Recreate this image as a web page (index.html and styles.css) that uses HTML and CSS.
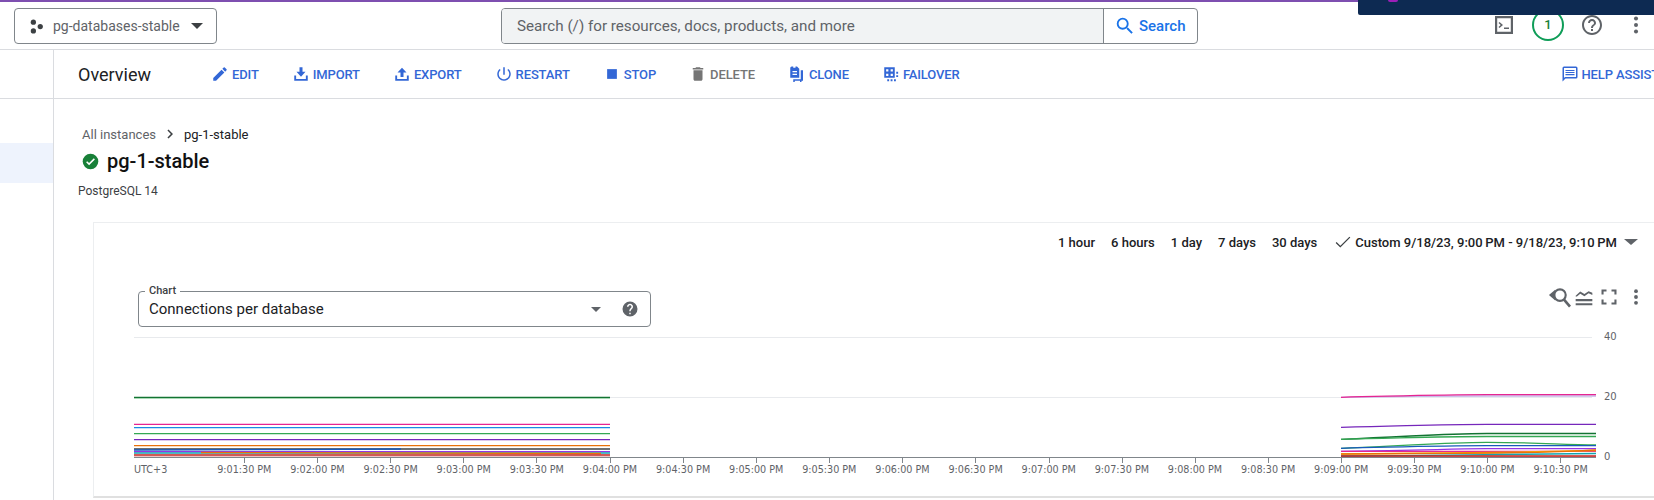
FILE: index.html
```html
<!DOCTYPE html>
<html lang="en">
<head>
<meta charset="utf-8">
<title>pg-1-stable</title>
<link rel="stylesheet" href="styles.css">
</head>
<body>
<div class="page">
  <div class="topline"></div>
  <div class="banner"><span class="banner-dot"></span></div>
  <header class="header">
    <button class="project">
      <svg class="project-icon" viewBox="0 0 24 24"><circle cx="7" cy="5" r="4.2"/><circle cx="7" cy="19" r="4.2"/><circle cx="18" cy="12" r="4.2"/></svg>
      <span class="project-name">pg-databases-stable</span>
      <span class="caret caret-dark"></span>
    </button>
    <div class="search">
      <div class="search-input">Search (/) for resources, docs, products, and more</div>
      <div class="search-btn">
        <svg class="search-icon" viewBox="0 0 24 24"><path d="M15.5 14h-.79l-.28-.27A6.47 6.47 0 0 0 16 9.5 6.5 6.5 0 1 0 9.5 16c1.61 0 3.09-.59 4.23-1.57l.27.28v.79l5 4.99L20.49 19l-4.99-5zm-6 0C7.01 14 5 11.99 5 9.5S7.01 5 9.5 5 14 7.01 14 9.5 11.99 14 9.5 14z"/></svg>
        <span>Search</span>
      </div>
    </div>
    <div class="tools">
      <svg class="tool tool-term" viewBox="0 0 24 24"><path d="M3 3h18v18H3zM5.200 5.200v13.600h13.600V5.200z" fill-rule="evenodd"/><path d="M7.500 9l3.500 3-3.500 3-1-1 2.200-2-2.200-2zM12 14.500h5V16h-5z"/></svg>
      <div class="badge">1</div>
      <svg class="tool tool-help" viewBox="0 0 24 24"><path d="M11 18h2v-2h-2v2zm1-16C6.48 2 2 6.48 2 12s4.48 10 10 10 10-4.48 10-10S17.52 2 12 2zm0 18c-4.41 0-8-3.59-8-8s3.59-8 8-8 8 3.59 8 8-3.59 8-8 8zm0-14c-2.21 0-4 1.79-4 4h2c0-1.1.9-2 2-2s2 .9 2 2c0 2-3 1.75-3 5h2c0-2.25 3-2.5 3-5 0-2.21-1.79-4-4-4z"/></svg>
      <svg class="tool tool-more" viewBox="0 0 24 24"><circle cx="12" cy="5" r="2.2"/><circle cx="12" cy="12" r="2.2"/><circle cx="12" cy="19" r="2.2"/></svg>
    </div>
  </header>
  <div class="layout">
    <aside class="rail">
      <div class="rail-head"></div>
      <div class="rail-item"></div>
    </aside>
    <main class="main">
      <div class="toolbar">
        <h2 class="toolbar-title">Overview</h2>
        <div class="actions">
          <a class="action"><svg viewBox="0 0 24 24"><path d="M3 17.25V21h3.75L17.81 9.94l-3.75-3.75L3 17.25zM20.71 7.04a1 1 0 0 0 0-1.41l-2.34-2.34a1 1 0 0 0-1.41 0l-1.83 1.83 3.75 3.75 1.83-1.83z"/></svg>EDIT</a>
          <a class="action"><svg viewBox="0 0 24 24"><path d="M10 3h4v6h4l-6 6.5L6 9h4zM3 14h2.500v4.500h13V14H21v7H3z"/></svg>IMPORT</a>
          <a class="action"><svg viewBox="0 0 24 24"><path d="M10 16V10H6l6-6.500L18 10h-4v6zM3 14h2.500v4.500h13V14H21v7H3z"/></svg>EXPORT</a>
          <a class="action"><svg viewBox="0 0 24 24"><path d="M13 3h-2v10h2V3zm4.830 2.170l-1.420 1.420C17.990 7.860 19 9.810 19 12c0 3.870-3.130 7-7 7s-7-3.130-7-7c0-2.190 1.010-4.140 2.580-5.420L6.170 5.170C4.230 6.820 3 9.260 3 12c0 4.970 4.030 9 9 9s9-4.030 9-9c0-2.740-1.230-5.180-3.170-6.830z"/></svg>RESTART</a>
          <a class="action"><svg viewBox="0 0 24 24"><path d="M5.500 5.500h13v13h-13z"/></svg>STOP</a>
          <a class="action action-off"><svg viewBox="0 0 24 24"><path d="M6 19c0 1.100.9 2 2 2h8c1.100 0 2-.9 2-2V7H6v12zM19 4h-3.500l-1-1h-5l-1 1H5v2h14V4z"/></svg>DELETE</a>
          <a class="action"><svg viewBox="0 0 24 24"><path fill-rule="evenodd" d="M5 2h2v1.500h3V2h2l3 3v12H3V4a2 2 0 0 1 2-2zm1 6v1.800h6V8zm0 3.500v1.800h6v-1.800z"/><path d="M17 7h3v14h-2v1.500h-2V21H9v1.500H7V19h10z"/></svg>CLONE</a>
          <a class="action"><svg viewBox="0 0 24 24"><path fill-rule="evenodd" d="M3 3h14v14H3zM5.500 5.500v3h3v-3zm6 0v3h3v-3zM5.500 11.500v3h3v-3zm6 0v3h3v-3z"/><path d="M19 9h2.500v2.500H19zM19 13.500h2.500V16H19zM7 19h2.500v2.500H7zM11.500 19H14v2.500h-2.500zM16 19h2.500v2.500H16z"/></svg>FAILOVER</a>
          <a class="action action-help"><svg viewBox="0 0 24 24"><path d="M20 2H4a2 2 0 0 0-2 2v18l4-4h14a2 2 0 0 0 2-2V4a2 2 0 0 0-2-2zm0 14H5.170L4 17.170V4h16v12zM6 12h12v1.500H6zM6 9.300h12v1.500H6zM6 6.500h12V8H6z"/></svg>HELP ASSISTANT</a>
        </div>
      </div>
      <section class="content">
        <div class="crumbs">
          <span class="crumb-link">All instances</span>
          <svg class="crumb-sep" viewBox="0 0 24 24"><path d="M8.590 16.590 13.170 12 8.590 7.410 10 6l6 6-6 6z"/></svg>
          <span class="crumb-current">pg-1-stable</span>
        </div>
        <div class="title-row">
          <svg class="status" viewBox="0 0 24 24"><circle cx="12" cy="12" r="11" fill="#188038"/><path d="M10 17.200 5.800 13l1.500-1.500 2.700 2.700 6.700-6.700 1.500 1.500z" fill="#fff"/></svg>
          <h1 class="title">pg-1-stable</h1>
        </div>
        <div class="subtitle">PostgreSQL 14</div>
        <div class="card">
          <div class="ranges">
            <span class="range">1 hour</span>
            <span class="range">6 hours</span>
            <span class="range">1 day</span>
            <span class="range">7 days</span>
            <span class="range">30 days</span>
            <span class="range range-custom">
              <svg class="range-check" viewBox="0 0 24 24"><path d="M1 13.500 2.400 12l5.600 5.600L21.600 4 23 5.400 8 20.400z"/></svg>Custom 9/18/23, 9:00&#8201;PM - 9/18/23, 9:10&#8201;PM
            </span>
            <span class="caret caret-dim"></span>
          </div>
          <div class="chart-head">
            <div class="select">
              <span class="select-label">Chart</span>
              <span class="select-value">Connections per database</span>
              <span class="caret caret-small"></span>
              <svg class="select-help" viewBox="0 0 24 24"><path d="M12 2a10 10 0 1 0 0 20 10 10 0 0 0 0-20zm1 17h-2v-2h2v2zm2.070-7.750-.9.920C13.450 12.900 13 13.500 13 15h-2v-.5c0-1.100.45-2.100 1.170-2.830l1.240-1.260c.37-.36.59-.86.59-1.410 0-1.100-.9-2-2-2s-2 .9-2 2H8c0-2.210 1.790-4 4-4s4 1.790 4 4c0 .88-.36 1.680-.93 2.250z"/></svg>
            </div>
            <div class="chart-tools">
              <svg class="chart-tool tool-wide" viewBox="0 0 24 24"><path class="mag-arrow" d="M1 9.500 7.500 4v11z"/><circle class="mag-line" cx="12.500" cy="9.500" r="6"/><path class="mag-line mag-handle" d="M16.500 14 23 21.500"/></svg>
              <svg class="chart-tool" viewBox="0 0 24 24"><path d="M2 14.500h20V17H2zM2 19.500h20V22H2zM2 10.500l5.500-5 5 3 5-3.500 4.500 2v2.500l-4.500-2-5 3.500-5-3-4 3.500H2z"/></svg>
              <svg class="chart-tool" viewBox="0 0 24 24"><path d="M3 3h6v2.500H5.500V9H3zM15 3h6v6h-2.500V5.500H15zM3 15h2.500v3.500H9V21H3zM18.500 15H21v6h-6v-2.500h3.500z"/></svg>
              <svg class="chart-tool tool-dots" viewBox="0 0 24 24"><circle cx="12" cy="5" r="2.300"/><circle cx="12" cy="12" r="2.300"/><circle cx="12" cy="19" r="2.300"/></svg>
            </div>
          </div>
          <svg class="plot" viewBox="0 0 1561 166" width="1561" height="166">
            <g transform="translate(-93 -330)">
              <g class="grid">
                <path d="M133 337.500H1591"/>
                <path d="M133 397.500H1591"/>
              </g>
              <g class="series">
                <path stroke="#a8dab5" d="M133 398.300H609"/>
                <path stroke="#137333" d="M133 397.300H609"/>
                <path stroke="#e52592" d="M133 424.300H609"/>
                <path stroke="#1a8ae5" d="M133 427.700H609"/>
                <path stroke="#34a853" d="M133 433.700H609"/>
                <path stroke="#7627bb" d="M133 439.700H609"/>
                <path stroke="#e8710a" d="M133 445.700H609"/>
                <path stroke="#3c4043" d="M133 449H609"/>
                <path stroke="#185abc" d="M133 450C250 450 300 449.500 400 449"/>
                <path stroke="#9334e6" d="M133 451.700H609"/>
                <path stroke="#12a4af" d="M133 453H609"/>
                <path stroke="#e8710a" d="M200 452.500C300 452 400 453.500 600 453.500"/>
                <path stroke="#c5221f" d="M133 455H609"/>
                <path stroke="#b31412" d="M133 457.300H609"/>

                <path stroke="#c6b6e8" d="M1340 397.300C1420 396 1440 396 1486 396H1595"/>
                <path stroke="#e52592" d="M1340 397.300C1420 395.500 1440 394.700 1486 394.700H1595"/>
                <path stroke="#7627bb" d="M1340 427.300C1420 425.500 1440 424.300 1486 424.300H1595"/>
                <path stroke="#137333" d="M1340 439.300C1420 436 1440 433.500 1486 433.500H1595"/>
                <path stroke="#34a853" d="M1340 439.300C1420 437.500 1440 436.500 1486 436.500H1595"/>
                <path stroke="#34a853" d="M1340 448.300C1420 445 1440 442.300 1486 442.300C1530 442.300 1560 444.500 1595 445"/>
                <path stroke="#185abc" d="M1340 448.300C1420 446.500 1440 445.700 1486 445.700H1595"/>
                <path stroke="#9334e6" d="M1340 451.300C1420 451 1440 449 1486 448.700H1595"/>
                <path stroke="#e52592" d="M1340 451.300H1595"/>
                <path stroke="#f9ab00" d="M1340 454C1420 453 1440 453 1486 452.500C1530 452 1560 451 1595 450.500"/>
                <path stroke="#e8710a" d="M1340 454C1420 454 1460 453.500 1500 453C1540 452.500 1570 451 1595 450"/>
                <path stroke="#12a4af" d="M1340 456C1420 455.500 1480 455 1595 453.500"/>
                <path stroke="#c5221f" d="M1340 456H1595"/>
                <path stroke="#b31412" d="M1340 457.300H1595"/>
              </g>
              <path class="axis" d="M133 457.500H1595"/>
              <g class="ticks"><path d="M243.500 458v5M316.500 458v5M389.500 458v5M462.500 458v5M535.500 458v5M609.500 458v5M682.500 458v5M755.500 458v5M828.500 458v5M901.500 458v5M974.500 458v5M1048.500 458v5M1121.500 458v5M1194.500 458v5M1267.500 458v5M1340.500 458v5M1413.500 458v5M1486.500 458v5M1559.500 458v5"/></g>
              <g class="xlabels">
                <text x="133" y="473" class="start">UTC+3</text>
                <text x="243.300" y="473">9:01:30 PM</text>
                <text x="316.400" y="473">9:02:00 PM</text>
                <text x="389.600" y="473">9:02:30 PM</text>
                <text x="462.700" y="473">9:03:00 PM</text>
                <text x="535.800" y="473">9:03:30 PM</text>
                <text x="609" y="473">9:04:00 PM</text>
                <text x="682.100" y="473">9:04:30 PM</text>
                <text x="755.200" y="473">9:05:00 PM</text>
                <text x="828.300" y="473">9:05:30 PM</text>
                <text x="901.500" y="473">9:06:00 PM</text>
                <text x="974.600" y="473">9:06:30 PM</text>
                <text x="1047.700" y="473">9:07:00 PM</text>
                <text x="1120.900" y="473">9:07:30 PM</text>
                <text x="1194" y="473">9:08:00 PM</text>
                <text x="1267.100" y="473">9:08:30 PM</text>
                <text x="1340.200" y="473">9:09:00 PM</text>
                <text x="1413.400" y="473">9:09:30 PM</text>
                <text x="1486.500" y="473">9:10:00 PM</text>
                <text x="1559.600" y="473">9:10:30 PM</text>
              </g>
              <g class="ylabels">
                <text x="1603" y="340">40</text>
                <text x="1603" y="400">20</text>
                <text x="1603" y="460">0</text>
              </g>
            </g>
          </svg>
        </div>
      </section>
    </main>
  </div>
</div>
</body>
</html>
```

FILE: styles.css
```css
* { box-sizing: border-box; }
html, body { margin: 0; padding: 0; background: #fff; }
body { font-family: Roboto, "Liberation Sans", sans-serif; color: #202124; }
.page { position: relative; width: 1654px; height: 500px; overflow: hidden; }
.topline { height: 2px; background: #7e4fb0; }
.banner { position: absolute; top: 0; right: 0; width: 296px; height: 15px; background: #0d2a52; border-bottom-left-radius: 2px; z-index: 3; }
.banner-dot { display: block; width: 10px; height: 2px; margin-left: 30px; background: #9c1fb8; border-radius: 0 0 5px 5px; }

.header { display: flex; align-items: flex-start; height: 48px; padding: 6px 0 0 14px; border-bottom: 1px solid #dadce0; }
.project { display: flex; align-items: center; width: 203px; height: 36px; padding: 0 0 0 14px; background: #fff; border: 1px solid #80868b; border-radius: 4px; font: inherit; }
.project-icon { width: 15px; height: 15px; fill: #3c4043; }
.project-name { margin-left: 9px; font-size: 14px; color: #5f6368; white-space: nowrap; }
.caret { display: block; width: 0; height: 0; border-style: solid; border-color: transparent; border-width: 6px 6px 0; }
.caret-dark { margin-left: 11px; border-top-color: #3c4043; }

.search { display: flex; width: 697px; height: 36px; margin-left: 284px; border: 1px solid #80868b; border-radius: 4px; overflow: hidden; }
.search-input { flex: 1; padding-left: 15px; background: #f1f3f4; border-right: 1px solid #80868b; font-size: 15.200px; line-height: 34px; color: #5f6368; }
.search-btn { display: flex; align-items: center; width: 93px; padding-left: 10px; font-size: 15px; font-weight: 500; color: #1a73e8; }
.search-icon { width: 22px; height: 22px; margin-right: 3px; fill: #1a73e8; }

.tools { display: flex; align-items: center; height: 36px; margin: -1px 0 0 294px; }
.tool { fill: #5f6368; }
.tool-term { width: 24px; height: 24px; }
.badge { width: 32px; height: 32px; margin-left: 16px; border: 2px solid #0f9d58; border-radius: 50%; font-size: 13px; font-weight: 500; line-height: 28px; text-align: center; color: #188038; }
.tool-help { width: 24px; height: 24px; margin-left: 16px; }
.tool-more { width: 22px; height: 22px; margin-left: 21px; }

.layout { display: flex; }
.rail { flex: none; width: 54px; height: 450px; border-right: 1px solid #dadce0; }
.rail-head { height: 49px; border-bottom: 1px solid #dadce0; }
.rail-item { height: 40px; margin-top: 44px; background: #eef3fd; }

.main { flex: 1; min-width: 0; overflow: hidden; }
.toolbar { display: flex; align-items: center; height: 49px; padding-left: 24px; border-bottom: 1px solid #dadce0; white-space: nowrap; }
.toolbar-title { margin: 0; font-size: 18px; font-weight: 400; color: #202124; }
.actions { display: flex; align-items: center; gap: 33px; margin-left: 60px; }
.action { display: flex; align-items: center; gap: 3px; font-size: 13px; font-weight: 500; letter-spacing: -.13px; color: #3367d6; }
.action svg { width: 18px; height: 18px; fill: #3367d6; }
.action-off { color: #757575; }
.action-off svg { fill: #757575; }
.action-help { margin-left: 568px; }

.content { padding-top: 26px; }
.crumbs { display: flex; align-items: center; height: 18px; padding-left: 28px; font-size: 13px; }
.crumb-link { color: #5f6368; }
.crumb-sep { width: 18px; height: 18px; margin: 0 5px 0 5px; fill: #3c4043; }
.crumb-current { color: #202124; }
.title-row { display: flex; align-items: center; height: 28px; margin-top: 4px; padding-left: 28px; }
.status { width: 17px; height: 17px; }
.title { margin: 0 0 0 8px; font-size: 20px; font-weight: 500; color: #111; }
.subtitle { margin-top: 8px; padding-left: 24px; font-size: 12px; line-height: 16px; color: #3c4043; }

.card { margin: 23px 0 0 39px; height: 276px; border: 1px solid #eceef0; border-right: 0; border-bottom: 2px solid #e0e0e0; }
.ranges { display: flex; align-items: center; height: 38px; padding-left: 964px; font-size: 13px; font-weight: 500; color: #202124; white-space: nowrap; }
.range { margin-right: 16px; }
.range-custom { display: flex; align-items: center; margin-left: 2px; margin-right: 7px; }
.range-check { width: 16px; height: 16px; margin-right: 4px; fill: #3c4043; }
.caret-dim { border-width: 6px 7px 0; border-top-color: #5f6368; }

.chart-head { display: flex; align-items: flex-start; height: 69px; padding: 30px 0 0 44px; }
.select { position: relative; display: flex; align-items: center; width: 513px; height: 36px; padding: 0 11px 0 10px; border: 1px solid #80868b; border-radius: 4px; }
.select-label { position: absolute; top: -8px; left: 6px; padding: 0 4px; background: #fff; font-size: 11px; font-weight: 500; line-height: 14px; color: #3c4043; }
.select-value { flex: 1; font-size: 15px; color: #202124; }
.caret-small { border-width: 5px 5.500px 0; border-top-color: #5f6368; }
.select-help { width: 18px; height: 18px; margin-left: 20px; fill: #5f6368; }
.chart-tools { display: flex; align-items: center; gap: 5px; height: 22px; margin-left: 897px; margin-top: -5px; }
.chart-tool { width: 20px; height: 20px; fill: #5f6368; }
.tool-wide { width: 23px; height: 23px; margin-right: -2px; }
.tool-dots { margin-left: 2px; }
.mag-line { fill: none; stroke: #5f6368; stroke-width: 2.200; }
.mag-handle { stroke-width: 2.800; }

.plot { display: block; }
.grid path { stroke: #e8eaed; stroke-width: 1; fill: none; }
.series path { stroke-width: 1.300; fill: none; }
.axis { stroke: #80868b; stroke-width: 1; fill: none; }
.ticks path { stroke: #80868b; stroke-width: 1; fill: none; }
.xlabels text { font-family: "DejaVu Sans", sans-serif; font-size: 9.650px; fill: #5f6368; text-anchor: middle; }
.xlabels .start { text-anchor: start; }
.ylabels text { font-family: "DejaVu Sans", sans-serif; font-size: 10px; fill: #5f6368; }
```
